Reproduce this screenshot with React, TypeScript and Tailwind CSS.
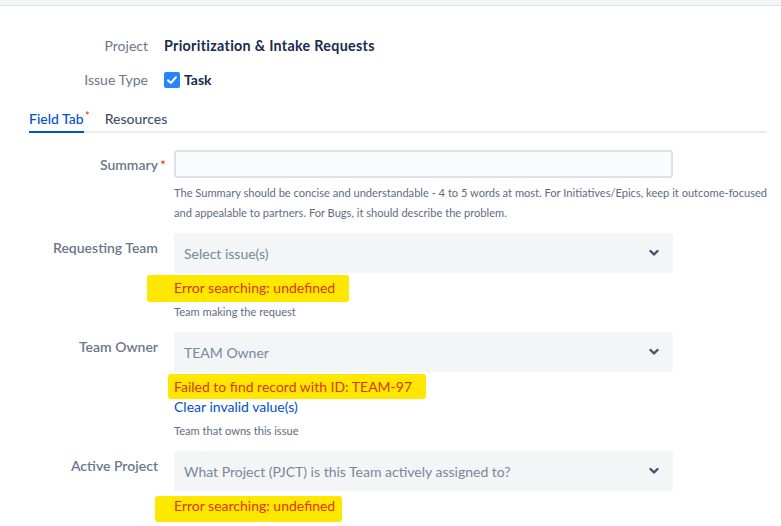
const labelCls = "w-[158px] shrink-0 pt-[5px] text-right text-[14px] leading-5 font-semibold text-[#6b778c]";

function Chevron() {
  return (
    <svg width="10" height="8" viewBox="0 0 10 8" className="shrink-0">
      <path d="M1.5 2 5 5.5 8.5 2" fill="none" stroke="#42526e" strokeWidth="2.4" strokeLinecap="round" strokeLinejoin="round" />
    </svg>
  );
}

function Select({ text }: { text: string }) {
  return (
    <div className="flex h-10 w-[499px] items-center justify-between rounded-[3px] bg-[#f4f5f7] pl-[10px] pr-[14px]">
      <span className="text-[14px] text-[#7a869a]">{text}</span>
      <Chevron />
    </div>
  );
}

function Highlight({ className, children }: { className: string; children: React.ReactNode }) {
  return (
    <div className="relative mt-[5px] w-fit text-[14px] leading-5">
      <span className={"absolute rounded-[3px] bg-[#ffe800] " + className} />
      <span className="relative text-[#de350b]">{children}</span>
    </div>
  );
}

function Help({ children }: { children: React.ReactNode }) {
  return <div className="mt-1 text-[11.1px] leading-5 text-[#5e6c84]">{children}</div>;
}

export default function App() {
  return (
    <div className="h-[526px] w-[781px] overflow-hidden bg-white font-['Lato',sans-serif] text-[#172b4d]">
      <div className="h-[6px] border-b border-[#dfe1e6] bg-[#f4f5f7]" />

      {/* project / type */}
      <div className="mt-[30px] flex gap-4 text-[14px] leading-5">
        <div className="w-[148px] text-right text-[#6b778c]">Project</div>
        <div className="text-[14.3px] font-bold tracking-[0.3px]">Prioritization &amp; Intake Requests</div>
      </div>
      <div className="mt-[14px] flex gap-4 text-[14px] leading-5">
        <div className="w-[148px] text-right text-[#6b778c]">Issue Type</div>
        <div className="flex items-center gap-1 font-bold">
          <svg width="16" height="16" viewBox="0 0 16 16">
            <rect width="16" height="16" rx="2" fill="#2684ff" />
            <path d="M4 8.2 6.8 11 12 5.2" fill="none" stroke="#fff" strokeWidth="2" strokeLinecap="round" strokeLinejoin="round" />
          </svg>
          Task
        </div>
      </div>

      {/* tabs */}
      <div className="mt-[19px] ml-[29px] mr-[14px] flex text-[14px] leading-5">
        <div className="relative border-b-2 border-[#0052cc] pb-[2px] font-medium text-[#0052cc]">
          Field Tab
          <span className="absolute -right-[6px] -top-[3px] text-[11px] text-[#de350b]">*</span>
        </div>
        <div className="w-[21px] border-b-2 border-[#ebecf0]" />
        <div className="border-b-2 border-[#ebecf0] pb-[2px] font-medium text-[#42526e]">Resources</div>
        <div className="flex-1 border-b-2 border-[#ebecf0]" />
      </div>

      {/* summary */}
      <div className="mt-[17px] flex gap-4">
        <div className={labelCls + " relative pt-[4px]"}>
          Summary<span className="absolute -right-[8px] font-normal text-[#de350b]">*</span>
        </div>
        <div>
          <div className="h-7 w-[499px] rounded-[3px] border-2 border-[#dfe1e6] bg-[#fafbfc]" />
          <div className="mt-[5px] whitespace-nowrap text-[11.1px] leading-5 text-[#5e6c84]">
            The Summary should be concise and understandable - 4 to 5 words at most. For Initiatives/Epics, keep it outcome-focused
            <br />
            and appealable to partners. For Bugs, it should describe the problem.
          </div>
        </div>
      </div>

      {/* requesting team */}
      <div className="mt-[10px] flex gap-4">
        <div className={labelCls}>Requesting Team</div>
        <div>
          <Select text="Select issue(s)" />
          <Highlight className="-left-[27px] -right-[14px] -top-[3px] -bottom-[4px]">Error searching: undefined</Highlight>
          <Help>Team making the request</Help>
        </div>
      </div>

      {/* team owner */}
      <div className="mt-[10px] flex gap-4">
        <div className={labelCls}>Team Owner</div>
        <div>
          <Select text="TEAM Owner" />
          <Highlight className="-left-[6px] -right-[14px] -top-[3px] -bottom-[2px]">Failed to find record with ID: TEAM-97</Highlight>
          <div className="text-[14px] leading-5 text-[#0052cc]">Clear invalid value(s)</div>
          <Help>Team that owns this issue</Help>
        </div>
      </div>

      {/* active project */}
      <div className="mt-[10px] flex gap-4">
        <div className={labelCls}>Active Project</div>
        <div>
          <Select text="What Project (PJCT) is this Team actively assigned to?" />
          <Highlight className="-left-[19px] -right-[7px] top-0 -bottom-[6px]">Error searching: undefined</Highlight>
        </div>
      </div>
    </div>
  );
}
